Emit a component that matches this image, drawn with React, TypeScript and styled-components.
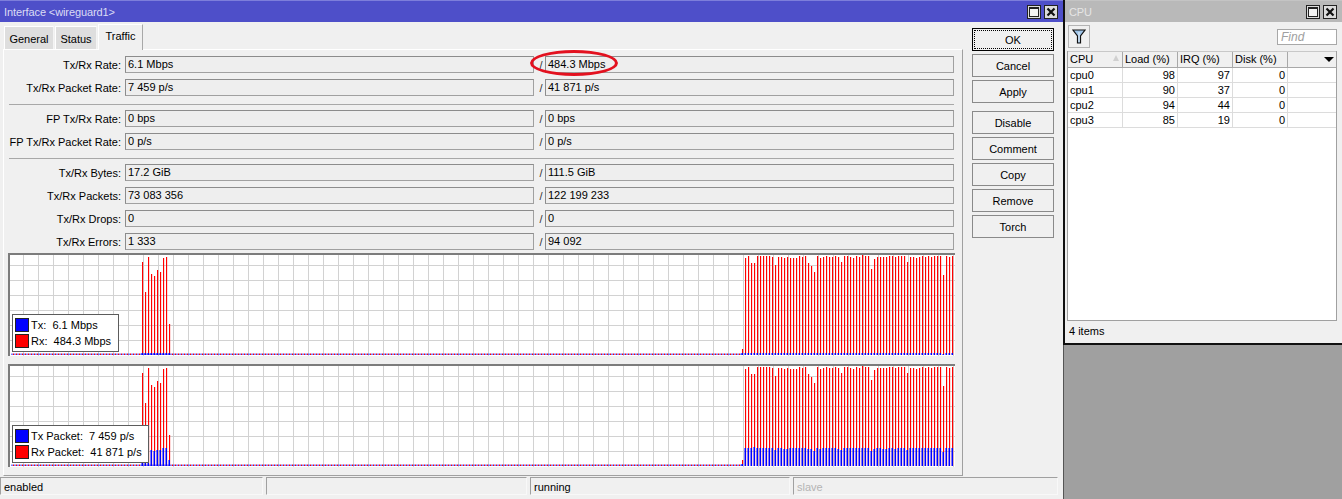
import styled, { createGlobalStyle } from "styled-components";

const GlobalStyle = createGlobalStyle`
  html, body {
    margin: 0;
    padding: 0;
    background: #a0a0a0;
  }
  * {
    box-sizing: border-box;
  }
  body {
    font-family: "Liberation Sans", Arial, sans-serif;
    font-size: 11px;
    color: #000;
    overflow: hidden;
  }
`;

const Desktop = styled.div`
  display: flex;
  width: 1342px;
  height: 499px;
  overflow: hidden;
`;

const MainWindow = styled.div`
  width: 1063px;
  height: 499px;
  flex: none;
  background: #f0f0f0;
  display: flex;
  flex-direction: column;
`;

const TitleBar = styled.div<{ $active?: boolean }>`
  height: 22px;
  flex: none;
  display: flex;
  align-items: center;
  padding: 0 5px 0 4px;
  background: ${(p) => (p.$active ? "#4e4fc9" : "#b9b9b9")};
  border-top: 1px solid ${(p) => (p.$active ? "#7d7edb" : "#c4c4c4")};
  color: ${(p) => (p.$active ? "#dcdcf4" : "#e6e6e6")};
  font-size: 11px;
`;

const TitleText = styled.span`
  flex: 1;
  letter-spacing: -0.1px;
`;

const WinButton = styled.div`
  width: 14px;
  height: 14px;
  margin-left: 3px;
  background: #dcdcdc;
  border: 1px solid #222;
  display: flex;
  align-items: center;
  justify-content: center;
`;

const Body = styled.div`
  flex: 1;
  display: flex;
  min-height: 0;
`;

const LeftColumn = styled.div`
  width: 963px;
  flex: none;
  padding-left: 3px;
`;

const TabStrip = styled.div`
  height: 27px;
  display: flex;
  align-items: flex-end;
  padding-left: 1px;
  gap: 1px;
`;

const Tab = styled.div<{ $active?: boolean; $width: number }>`
  width: ${(p) => p.$width}px;
  height: ${(p) => (p.$active ? 26 : 23)}px;
  margin-bottom: ${(p) => (p.$active ? -1 : 0)}px;
  position: relative;
  background: ${(p) => (p.$active ? "#f0f0f0" : "#dedede")};
  border-top: 1px solid #fff;
  border-left: 1px solid #fff;
  border-right: 1px solid ${(p) => (p.$active ? "#a8a8a8" : "#f4f4f4")};
  text-align: center;
  line-height: ${(p) => (p.$active ? 22 : 24)}px;
  font-size: 11px;
`;

const Panel = styled.div`
  width: 960px;
  height: 427px;
  padding: 6px 7px 0 4px;
  background: #f0f0f0;
  border-top: 1px solid #fff;
  border-left: 1px solid #fff;
  border-right: 1px solid #a0a0a0;
  border-bottom: 1px solid #a0a0a0;
`;

const Form = styled.div`
  display: flex;
  flex-direction: column;
  gap: 6px;
  padding-right: 1px;
`;

const FormRow = styled.div`
  display: grid;
  grid-template-columns: 117px 409px 11px 409px;
  height: 17px;
  align-items: center;
`;

const Label = styled.div`
  text-align: right;
  padding-right: 4px;
  white-space: nowrap;
  font-size: 11px;
`;

const Field = styled.div`
  height: 17px;
  padding-left: 2px;
  line-height: 15px;
  position: relative;
  background: #eeeeee;
  border: 1px solid #a0a0a0;
  border-top-color: #8c8c8c;
  border-left-color: #8c8c8c;
`;

const Slash = styled.div`
  text-align: center;
  padding-left: 3px;
  color: #333;
`;

const RedEllipse = styled.div`
  position: absolute;
  left: -16px;
  top: -7px;
  width: 88px;
  height: 26px;
  border: 3px solid #e3111f;
  border-radius: 50%;
`;

const Separator = styled.div`
  height: 1px;
  margin: 2px 0 -1px 1px;
  background: #a8a8a8;
`;

const Charts = styled.div`
  margin-top: 3px;
  display: flex;
  flex-direction: column;
  gap: 8px;
`;

const ChartFrame = styled.div`
  position: relative;
  width: 947px;
  height: 103px;
  background: #fff;
  border-top: 2px solid #7c7c7c;
  border-left: 2px solid #7c7c7c;
`;

const ChartSvg = styled.svg`
  display: block;
`;

const Legend = styled.div<{ $width: number }>`
  position: absolute;
  left: 2px;
  top: 59px;
  width: ${(p) => p.$width}px;
  height: 38px;
  background: #fff;
  border: 1px solid #5c5c5c;
  padding: 3px 2px;
  display: flex;
  flex-direction: column;
  gap: 3px;
`;

const LegendRow = styled.div`
  display: flex;
  align-items: center;
  height: 13px;
  gap: 2px;
  white-space: pre;
  font-size: 11px;
`;

const Swatch = styled.span<{ $color: string }>`
  width: 14px;
  height: 14px;
  flex: none;
  background: ${(p) => p.$color};
  border: 1px solid #222;
`;

const ButtonColumn = styled.div`
  margin-left: 9px;
  padding-top: 6px;
  width: 82px;
  display: flex;
  flex-direction: column;
`;

const ActionButton = styled.div<{ $primary?: boolean; $spaced?: boolean }>`
  width: 82px;
  height: 23px;
  margin-bottom: 3px;
  margin-top: ${(p) => (p.$spaced ? 5 : 0)}px;
  background: #f0f0f0;
  border: 1px solid ${(p) => (p.$primary ? "#000" : "#8a8a8a")};
  display: flex;
  align-items: center;
  justify-content: center;
  outline: ${(p) => (p.$primary ? "1px dotted #000" : "none")};
  outline-offset: -3px;
`;

const StatusBar = styled.div`
  height: 23px;
  flex: none;
  display: flex;
  gap: 3px;
  padding: 1px 5px 4px 0;
`;

const StatusCell = styled.div<{ $width: number; $muted?: boolean }>`
  width: ${(p) => p.$width}px;
  flex: none;
  padding-left: 3px;
  line-height: 18px;
  color: ${(p) => (p.$muted ? "#b4b4b4" : "#000")};
  border-top: 1px solid #a0a0a0;
  border-left: 1px solid #a0a0a0;
  border-right: 1px solid #f8f8f8;
  border-bottom: 1px solid #f8f8f8;
`;

const SideColumn = styled.div`
  flex: 1;
  display: flex;
  flex-direction: column;
  background: #a0a0a0;
`;

const CpuWindow = styled.div`
  height: 345px;
  flex: none;
  display: flex;
  flex-direction: column;
  background: #f0f0f0;
  border-left: 2px solid #111;
  border-bottom: 2px solid #111;
`;

const DesktopGap = styled.div`
  flex: 1;
  border-left: 1px solid #555;
`;

const Toolbar = styled.div`
  height: 29px;
  flex: none;
  display: flex;
  align-items: center;
  justify-content: space-between;
  padding: 0 5px 0 3px;
`;

const FilterButton = styled.div`
  width: 22px;
  height: 23px;
  background: #f0f0f0;
  border: 1px solid #b4b4b4;
  display: flex;
  align-items: center;
  justify-content: center;
`;

const FindBox = styled.div`
  width: 60px;
  height: 16px;
  padding-left: 3px;
  line-height: 14px;
  background: #fff;
  border: 1px solid #a8a8a8;
  color: #a0a0a0;
  font-style: italic;
  font-size: 12px;
`;

const Table = styled.div`
  flex: 1;
  margin: 0 5px 0 2px;
  background: #fff;
  border: 1px solid #a0a0a0;
  border-top: none;
`;

const TableRow = styled.div<{ $header?: boolean }>`
  display: grid;
  grid-template-columns: 55px 55px 55px 55px 1fr;
  height: ${(p) => (p.$header ? 17 : 15)}px;
  background: ${(p) => (p.$header ? "#f0f0f0" : "#fff")};
  border-top: ${(p) => (p.$header ? "1px solid #c8c8c8" : "none")};
  border-bottom: 1px solid ${(p) => (p.$header ? "#a8a8a8" : "#dcdcdc")};
`;

const TableCell = styled.div<{ $right?: boolean; $header?: boolean }>`
  position: relative;
  padding: 0 2px;
  text-align: ${(p) => (p.$right ? "right" : "left")};
  line-height: ${(p) => (p.$header ? 15 : 14)}px;
  border-right: 1px solid ${(p) => (p.$header ? "#a8a8a8" : "#dcdcdc")};
  font-size: 11px;
  &:last-child {
    border-right: none;
  }
`;

const SortMark = styled.span`
  position: absolute;
  right: 3px;
  top: 3px;
  width: 0;
  height: 0;
  border-left: 3px solid transparent;
  border-right: 3px solid transparent;
  border-bottom: 6px solid #d0d0d0;
`;

const MenuMark = styled.span`
  position: absolute;
  right: 2px;
  top: 5px;
  width: 0;
  height: 0;
  border-left: 5px solid transparent;
  border-right: 5px solid transparent;
  border-top: 5px solid #000;
`;

const CpuStatus = styled.div`
  height: 22px;
  flex: none;
  padding: 2px 0 0 4px;
  line-height: 16px;
  font-size: 11px;
`;

const formRows = [
  ["Tx/Rx Rate:", "6.1 Mbps", "484.3 Mbps"],
  ["Tx/Rx Packet Rate:", "7 459 p/s", "41 871 p/s"],
  null,
  ["FP Tx/Rx Rate:", "0 bps", "0 bps"],
  ["FP Tx/Rx Packet Rate:", "0 p/s", "0 p/s"],
  null,
  ["Tx/Rx Bytes:", "17.2 GiB", "111.5 GiB"],
  ["Tx/Rx Packets:", "73 083 356", "122 199 233"],
  ["Tx/Rx Drops:", "0", "0"],
  ["Tx/Rx Errors:", "1 333", "94 092"],
];

const actions = ["OK", "Cancel", "Apply", "Disable", "Comment", "Copy", "Remove", "Torch"];

const cpus = [
  ["cpu0", "98", "97", "0"],
  ["cpu1", "90", "37", "0"],
  ["cpu2", "94", "44", "0"],
  ["cpu3", "85", "19", "0"],
];

// top of each red bar inside the chart, first burst then the long run
const burstTops = [7, 37, 2, 19, 21, 15, 17, 3, 2, 69];
const burstBlue = [10, 10, 14, 16, 15, 16, 16, 18, 18, 6];
const runTops = [
  3, 1, 8, 8, 1, 1, 1, 1, 1, 2, 10, 2, 2, 3, 2, 3, 3, 3, 1, 2, 1, 8, 11, 17, 1, 3, 2, 1, 2, 2, 1, 2,
  7, 1, 1, 2, 3, 1, 2, 0, 1, 1, 14, 4, 2, 2, 2, 2, 1, 1, 2, 1, 1, 1, 7, 2, 2, 3, 2, 1, 2, 1, 2, 1,
  1, 1, 20, 1, 2, 1,
];
const runBlue: Record<number, number> = {
  3: 19, 10: 16, 13: 17, 14: 17, 21: 17, 22: 17, 23: 15, 25: 17, 31: 17, 32: 16,
  42: 15, 43: 17, 46: 17, 47: 17, 50: 17, 54: 16, 66: 14,
};

const BASE = 100;
// chart x is offset by 10px from the window
const cx = (x: number) => x - 10;

function Chart({ packets }: { packets?: boolean }) {
  const verticals = Array.from({ length: 63 }, (_, i) => cx(23 + i * 15));
  const horizontals = [10, 25, 40, 55, 70, 85];
  const baseline = Array.from({ length: 244 }, (_, i) => cx(13 + i * 3));
  const bars = [
    ...burstTops.map((top, i) => ({
      x: cx(142 + i * 3),
      top,
      blue: packets ? burstBlue[i] : 2,
    })),
    { x: cx(742), top: BASE - 6, blue: 2 },
    ...runTops.map((top, i) => ({
      x: cx(745 + i * 3),
      top,
      blue: packets ? runBlue[i] ?? 18 : i === 66 ? 1 : 2,
    })),
  ];
  return (
    <ChartSvg width={945} height={101} viewBox="0 0 945 101">
      {verticals.map((x) => (
        <rect key={x} x={x} y={0} width={1} height={101} fill="#d2d2d2" />
      ))}
      {horizontals.map((y) => (
        <rect key={y} x={0} y={y} width={945} height={1} fill="#d2d2d2" />
      ))}
      {baseline.map((x) => (
        <g key={x}>
          <rect x={x} y={BASE - 1.5} width={1} height={1.5} fill="#ff0000" />
          <rect x={x - 1.5} y={BASE - 1.5} width={1} height={1.5} fill="#0000ff" />
        </g>
      ))}
      {bars.map((b) => (
        <g key={b.x}>
          <rect x={b.x} y={b.top} width={1.15} height={BASE - b.top} fill="#ff0000" />
          <rect x={b.x - 0.5} y={BASE - b.blue} width={1.5} height={b.blue} fill="#0000ff" />
        </g>
      ))}
    </ChartSvg>
  );
}

function MaxIcon() {
  return (
    <svg width="10" height="10" viewBox="0 0 10 10">
      <rect x="0.5" y="0.5" width="9" height="9" fill="#f4f4f4" stroke="#222" />
      <rect x="0" y="0" width="10" height="2" fill="#222" />
    </svg>
  );
}

function CloseIcon() {
  return (
    <svg width="10" height="10" viewBox="0 0 10 10">
      <path d="M1.5 1.5 L8.5 8.5 M8.5 1.5 L1.5 8.5" stroke="#111" strokeWidth="2.2" />
    </svg>
  );
}

function FunnelIcon() {
  return (
    <svg width="14" height="15" viewBox="0 0 14 15">
      <path d="M1 1 H13 L8.5 7 V14 H5.5 V7 Z" fill="#9fc4e8" stroke="#111" strokeWidth="1.2" />
      <path d="M7 3 V13" stroke="#e8f2fb" strokeWidth="1" />
    </svg>
  );
}

export default function App() {
  return (
    <>
      <GlobalStyle />
      <Desktop>
        <MainWindow>
          <TitleBar $active>
            <TitleText>Interface &lt;wireguard1&gt;</TitleText>
            <WinButton>
              <MaxIcon />
            </WinButton>
            <WinButton>
              <CloseIcon />
            </WinButton>
          </TitleBar>
          <Body>
            <LeftColumn>
              <TabStrip>
                <Tab $width={50}>General</Tab>
                <Tab $width={42}>Status</Tab>
                <Tab $width={45} $active>
                  Traffic
                </Tab>
              </TabStrip>
              <Panel>
                <Form>
                  {formRows.map((row, i) =>
                    row ? (
                      <FormRow key={row[0]}>
                        <Label>{row[0]}</Label>
                        <Field>{row[1]}</Field>
                        <Slash>/</Slash>
                        <Field>
                          {row[2]}
                          {i === 0 && <RedEllipse />}
                        </Field>
                      </FormRow>
                    ) : (
                      <Separator key={i} />
                    )
                  )}
                </Form>
                <Charts>
                  <ChartFrame>
                    <Chart />
                    <Legend $width={107}>
                      <LegendRow>
                        <Swatch $color="#0000ff" />
                        {"Tx:  6.1 Mbps"}
                      </LegendRow>
                      <LegendRow>
                        <Swatch $color="#ff0000" />
                        {"Rx:  484.3 Mbps"}
                      </LegendRow>
                    </Legend>
                  </ChartFrame>
                  <ChartFrame>
                    <Chart packets />
                    <Legend $width={137}>
                      <LegendRow>
                        <Swatch $color="#0000ff" />
                        {"Tx Packet:  7 459 p/s"}
                      </LegendRow>
                      <LegendRow>
                        <Swatch $color="#ff0000" />
                        {"Rx Packet:  41 871 p/s"}
                      </LegendRow>
                    </Legend>
                  </ChartFrame>
                </Charts>
              </Panel>
            </LeftColumn>
            <ButtonColumn>
              {actions.map((label) => (
                <ActionButton key={label} $primary={label === "OK"} $spaced={label === "Disable"}>
                  {label}
                </ActionButton>
              ))}
            </ButtonColumn>
          </Body>
          <StatusBar>
            <StatusCell $width={263}>enabled</StatusCell>
            <StatusCell $width={261} />
            <StatusCell $width={260}>running</StatusCell>
            <StatusCell $width={265} $muted>
              slave
            </StatusCell>
          </StatusBar>
        </MainWindow>
        <SideColumn>
          <CpuWindow>
            <TitleBar>
              <TitleText>CPU</TitleText>
              <WinButton>
                <MaxIcon />
              </WinButton>
              <WinButton>
                <CloseIcon />
              </WinButton>
            </TitleBar>
            <Toolbar>
              <FilterButton>
                <FunnelIcon />
              </FilterButton>
              <FindBox>Find</FindBox>
            </Toolbar>
            <Table>
              <TableRow $header>
                <TableCell $header>
                  CPU
                  <SortMark />
                </TableCell>
                <TableCell $header>Load (%)</TableCell>
                <TableCell $header>IRQ (%)</TableCell>
                <TableCell $header>Disk (%)</TableCell>
                <TableCell $header>
                  <MenuMark />
                </TableCell>
              </TableRow>
              {cpus.map((c) => (
                <TableRow key={c[0]}>
                  <TableCell>{c[0]}</TableCell>
                  <TableCell $right>{c[1]}</TableCell>
                  <TableCell $right>{c[2]}</TableCell>
                  <TableCell $right>{c[3]}</TableCell>
                  <TableCell />
                </TableRow>
              ))}
            </Table>
            <CpuStatus>4 items</CpuStatus>
          </CpuWindow>
          <DesktopGap />
        </SideColumn>
      </Desktop>
    </>
  );
}
